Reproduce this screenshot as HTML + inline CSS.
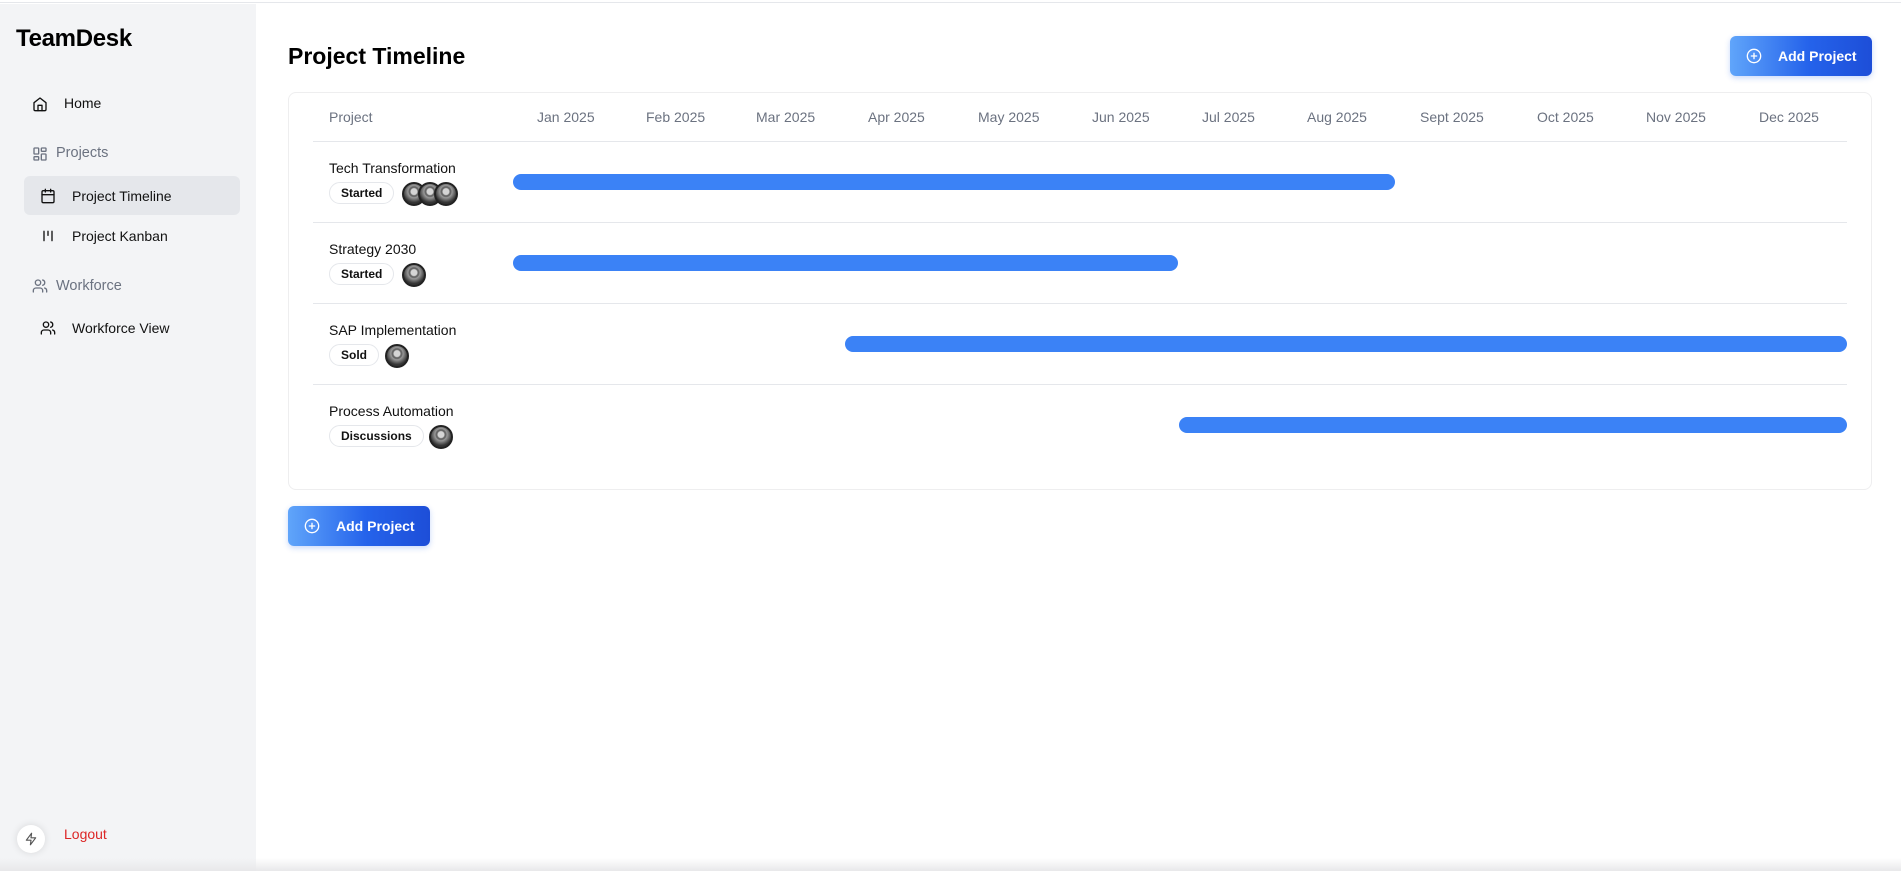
<!DOCTYPE html>
<html><head><meta charset="utf-8"><style>
*{box-sizing:border-box;margin:0;padding:0}
body{width:1901px;height:871px;overflow:hidden;font-family:"Liberation Sans",sans-serif;background:#fff;position:relative;color:#111}
.top{position:absolute;left:0;top:0;width:1901px;height:3px;border-bottom:1px solid #e5e7eb;background:#fff}
.side{position:absolute;left:0;top:4px;width:256px;height:867px;background:#f3f4f6}
.logo{position:absolute;left:16px;top:21px;font-size:24px;font-weight:700;color:#000;letter-spacing:-0.3px}
.nav{position:absolute;font-size:14px;color:#111;display:flex;align-items:center}
.sec{color:#6b7280;font-size:14.5px}
.active{position:absolute;left:24px;top:176px;width:216px;height:39px;background:#e5e7eb;border-radius:6px}
.main h1{position:absolute;left:288px;top:43px;font-size:23px;font-weight:700;color:#000}
.btn{position:absolute;width:142px;height:40px;border-radius:6px;background:linear-gradient(90deg,#60a5fa,#2563eb 55%,#1d4ed8);color:#fff;font-size:14px;font-weight:700;box-shadow:0 2px 6px rgba(37,99,235,.25)}
.btn svg{position:absolute;left:16px;top:12px}
.btn span{position:absolute;left:48px;top:12px}
.card{position:absolute;left:288px;top:92px;width:1584px;height:398px;border:1px solid #eeeeef;border-radius:8px}
.hdr{position:absolute;top:109px;font-size:14px;color:#6b7280}
.line{position:absolute;left:313px;width:1534px;height:1px;background:#e5e7eb}
.name{position:absolute;left:329px;font-size:14px;color:#111}
.badge{position:absolute;left:329px;height:22px;border:1px solid #e5e7eb;border-radius:11px;font-size:12px;font-weight:600;padding:0 11px;line-height:20px;color:#111}
.av{position:absolute;width:24px;height:24px;border-radius:50%;border:2px solid #222;background:radial-gradient(circle at 50% 38%,#d5d5d5 0 3px,#666 4px 5px,#999 6px,#333 11px)}
.bar{position:absolute;height:16px;border-radius:8px;background:#3b82f6}
</style></head><body>
<div class="top"></div>
<div class="side">
<div class="logo">TeamDesk</div>
</div>
<div class="active"></div>
<div class="nav" style="left:64px;top:95px">Home</div>
<svg style="position:absolute;left:32px;top:96px" width="16" height="16" viewBox="0 0 24 24" fill="none" stroke="#111" stroke-width="2" stroke-linecap="round" stroke-linejoin="round"><path d="M3 10l9-7 9 7v10a2 2 0 0 1-2 2H5a2 2 0 0 1-2-2z"/><path d="M9 22v-8h6v8"/></svg>
<div class="nav sec" style="left:56px;top:145px">Projects</div>
<svg style="position:absolute;left:32px;top:146px" width="16" height="16" viewBox="0 0 24 24" fill="none" stroke="#6b7280" stroke-width="2"><rect x="3" y="3" width="7" height="9" rx="1"/><rect x="14" y="3" width="7" height="5" rx="1"/><rect x="14" y="12" width="7" height="9" rx="1"/><rect x="3" y="16" width="7" height="5" rx="1"/></svg>
<div class="nav" style="left:72px;top:188px">Project Timeline</div>
<svg style="position:absolute;left:40px;top:188px" width="16" height="16" viewBox="0 0 24 24" fill="none" stroke="#111" stroke-width="2" stroke-linecap="round"><rect x="3" y="4" width="18" height="18" rx="2"/><path d="M16 2v4M8 2v4M3 10h18"/></svg>
<div class="nav" style="left:72px;top:228px">Project Kanban</div>
<svg style="position:absolute;left:40px;top:228px" width="16" height="16" viewBox="0 0 24 24" fill="none" stroke="#111" stroke-width="2" stroke-linecap="round"><path d="M6 5v14M12 5v6M18 5v14"/></svg>
<div class="nav sec" style="left:56px;top:278px">Workforce</div>
<svg style="position:absolute;left:32px;top:278px" width="16" height="16" viewBox="0 0 24 24" fill="none" stroke="#6b7280" stroke-width="2" stroke-linecap="round"><circle cx="9" cy="7" r="4"/><path d="M2 21v-2a4 4 0 0 1 4-4h6a4 4 0 0 1 4 4v2M16 3.1a4 4 0 0 1 0 7.8M22 21v-2a4 4 0 0 0-3-3.9"/></svg>
<div class="nav" style="left:72px;top:320px">Workforce View</div>
<svg style="position:absolute;left:40px;top:320px" width="16" height="16" viewBox="0 0 24 24" fill="none" stroke="#111" stroke-width="2" stroke-linecap="round"><circle cx="9" cy="7" r="4"/><path d="M2 21v-2a4 4 0 0 1 4-4h6a4 4 0 0 1 4 4v2M16 3.1a4 4 0 0 1 0 7.8M22 21v-2a4 4 0 0 0-3-3.9"/></svg>
<div class="nav" style="left:64px;top:826px;color:#dc2626">Logout</div>
<div style="position:absolute;left:17px;top:825px;width:28px;height:28px;border-radius:50%;background:#fff;box-shadow:0 0 8px rgba(0,0,0,.12)"></div>
<svg style="position:absolute;left:24px;top:832px" width="14" height="14" viewBox="0 0 24 24" fill="none" stroke="#555" stroke-width="2" stroke-linejoin="round"><path d="M13 2L4 14h8l-1 8 9-12h-8z"/></svg>

<div class="main"><h1>Project Timeline</h1></div>
<div class="btn" style="left:1730px;top:36px"><svg width="16" height="16" viewBox="0 0 24 24" fill="none" stroke="#fff" stroke-width="2" stroke-linecap="round"><circle cx="12" cy="12" r="10"/><path d="M12 8v8M8 12h8"/></svg><span>Add Project</span></div>
<div class="card"></div>
<div class="hdr" style="left:329px">Project</div>
<div class="hdr" style="left:537px">Jan 2025</div>
<div class="hdr" style="left:646px">Feb 2025</div>
<div class="hdr" style="left:756px">Mar 2025</div>
<div class="hdr" style="left:868px">Apr 2025</div>
<div class="hdr" style="left:978px">May 2025</div>
<div class="hdr" style="left:1092px">Jun 2025</div>
<div class="hdr" style="left:1202px">Jul 2025</div>
<div class="hdr" style="left:1307px">Aug 2025</div>
<div class="hdr" style="left:1420px">Sept 2025</div>
<div class="hdr" style="left:1537px">Oct 2025</div>
<div class="hdr" style="left:1646px">Nov 2025</div>
<div class="hdr" style="left:1759px">Dec 2025</div>
<div class="line" style="top:141px"></div>
<div class="line" style="top:222px"></div>
<div class="line" style="top:303px"></div>
<div class="line" style="top:384px"></div>

<div class="name" style="top:160px">Tech Transformation</div>
<div class="badge" style="top:182px">Started</div>
<div class="av" style="left:402px;top:182px"></div><div class="av" style="left:418px;top:182px"></div><div class="av" style="left:434px;top:182px"></div>
<div class="bar" style="left:513px;top:174px;width:882px"></div>

<div class="name" style="top:241px">Strategy 2030</div>
<div class="badge" style="top:263px">Started</div>
<div class="av" style="left:402px;top:263px"></div>
<div class="bar" style="left:513px;top:255px;width:665px"></div>

<div class="name" style="top:322px">SAP Implementation</div>
<div class="badge" style="top:344px">Sold</div>
<div class="av" style="left:385px;top:344px"></div>
<div class="bar" style="left:845px;top:336px;width:1002px"></div>

<div class="name" style="top:403px">Process Automation</div>
<div class="badge" style="top:425px">Discussions</div>
<div class="av" style="left:429px;top:425px"></div>
<div class="bar" style="left:1179px;top:417px;width:668px"></div>

<div class="btn" style="left:288px;top:506px"><svg width="16" height="16" viewBox="0 0 24 24" fill="none" stroke="#fff" stroke-width="2" stroke-linecap="round"><circle cx="12" cy="12" r="10"/><path d="M12 8v8M8 12h8"/></svg><span>Add Project</span></div>
<div style="position:absolute;left:0;top:858px;width:1901px;height:13px;background:linear-gradient(#fff0,#e8e8ea)"></div>
</body></html>
